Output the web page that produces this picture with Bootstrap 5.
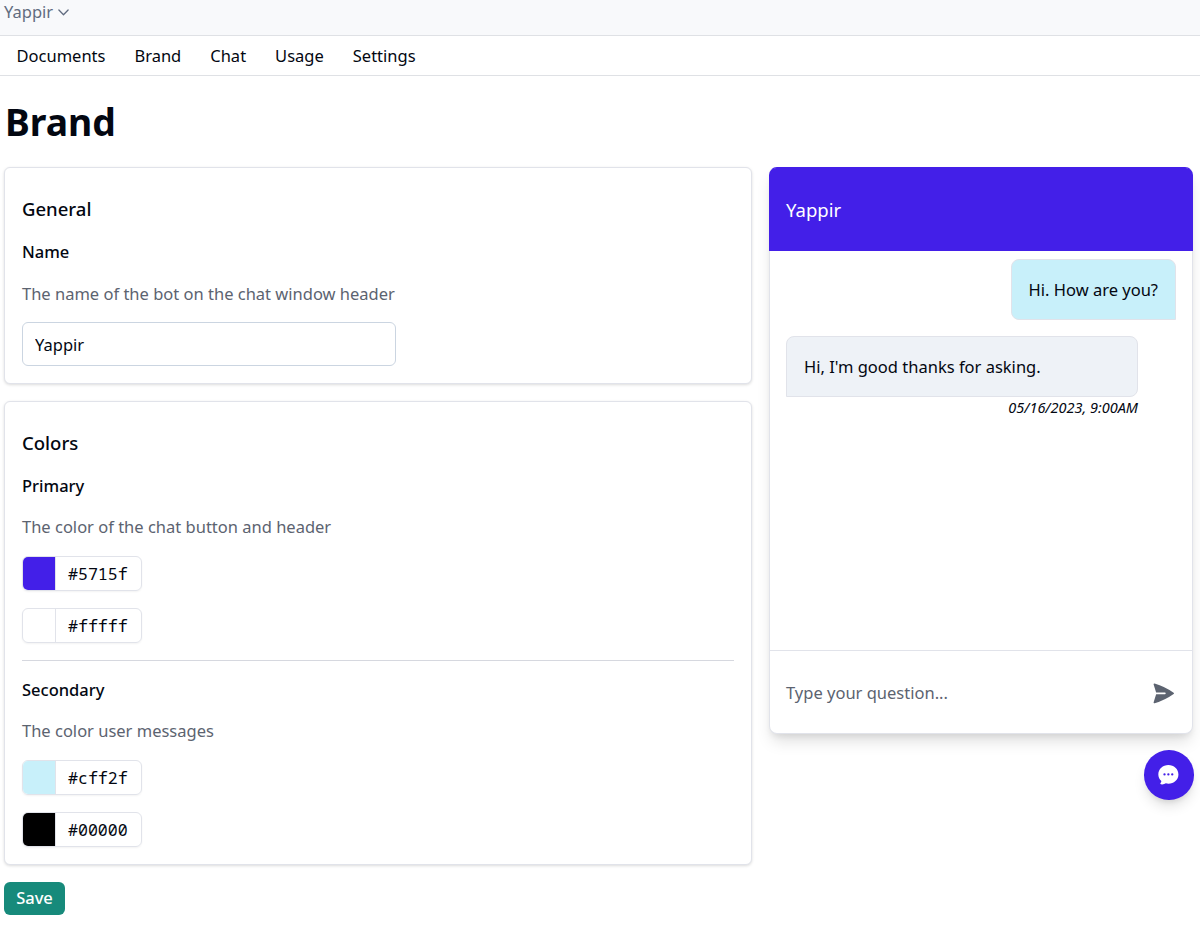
<!DOCTYPE html>
<html lang="en">
<head>
<meta charset="utf-8">
<meta name="viewport" content="width=device-width, initial-scale=1">
<title>Brand</title>
<link href="https://cdn.jsdelivr.net/npm/bootstrap@5.3.0/dist/css/bootstrap.min.css" rel="stylesheet">
<style>
:root { --ink:#030711; --muted-ink:#5c6370; --line:#e1e3ea; --brand:#431fe8; --user:#c8f0fa; }
body { font-family:"Noto Sans",sans-serif; font-size:16.5px; line-height:24.75px; color:var(--ink); background:#fff; }
.topbar { height:36px; background:#f8f9fb; border-bottom:1px solid #dfe1e5; padding-left:4px; color:#616c80; }
.topbar a { color:inherit; line-height:24px; gap:5px; }
.mainnav { height:40px; border-bottom:1px solid #dfe1e5; padding:2px 0 0 16.5px; gap:29px; }
.mainnav .nav-link { color:var(--ink); padding:0; }
.page { padding:0 7px 0 4px; }
.page h1 { font-size:37.3px; line-height:42px; font-weight:700; padding:25px 0 0 1px; margin:0 0 24px; }
.settings { width:748px; gap:17px; }
.panel { border:1px solid var(--line); border-radius:6px; padding:28px 17px 17px; box-shadow:0 1px 3px rgba(0,0,0,.14); background:#fff; }
.panel h2 { font-size:18.55px; line-height:25px; font-weight:500; margin:0 0 19px; }
.panel h3 { font-size:16.5px; line-height:24px; font-weight:500; margin:0 0 17px; }
.panel p { color:var(--muted-ink); margin:0 0 16px; line-height:25px; }
.panel-colors h3 { margin-bottom:16px; }
.panel-colors p { margin-bottom:17px; }
.name-field { width:374px; height:44px; border:1px solid #cbd5e1; border-radius:6px; padding:0 12px; font-size:16.5px; color:var(--ink); }
.swatch { width:120px; height:35px; border:1px solid var(--line); border-radius:6px; overflow:hidden; box-shadow:0 1px 2px rgba(0,0,0,.05); font-family:"Noto Sans Mono","DejaVu Sans Mono",monospace; }
.swatch span:first-child { width:33px; border-right:1px solid var(--line); }
.swatch span:last-child { padding-left:12px; font-size:16.6px; line-height:33px; }
.swatches { gap:17px; }
.c-primary { background:var(--brand); } .c-user { background:var(--user); } .c-black { background:#000; }
.panel hr { margin:17px 0; border-color:#d6d8df; opacity:1; }
.btn-save { --bs-btn-bg:#178a7b; --bs-btn-color:#fff; --bs-btn-hover-bg:#127568; --bs-btn-hover-color:#fff; width:61px; height:33px; padding:0; border:0; border-radius:6px; font-size:16.5px; font-weight:500; }
.chat { width:424px; height:567px; border:1px solid var(--line); border-top-color:var(--brand); border-radius:8px; box-shadow:0 10px 16px -3px rgba(0,0,0,.13),0 4px 6px -2px rgba(0,0,0,.08); background:#fff; }
.chat-head { height:83px; background:var(--brand); color:#fff; font-size:18.55px; padding:2px 0 0 16px; margin:0 -1px 0 -1px; padding-left:17px; border-radius:7px 7px 0 0; }
.bubble { height:61px; border:1px solid var(--line); border-radius:8px; padding:2px 17px 0; }
.bubble.out { background:var(--user); border-bottom-right-radius:0; margin-top:8px; }
.bubble.in { background:#eef2f7; border-bottom-left-radius:0; width:352px; margin-top:16px; }
.stamp { width:352px; font-size:14.5px; line-height:20px; font-style:italic; }
.chat-body { padding:0 16px; }
.chat-foot { height:83px; border-top:1px solid var(--line); padding:2px 16px 0; color:var(--muted-ink); }
.fab { width:49.5px; height:49.5px; border:0; border-radius:50%; background:var(--brand); color:#fff; margin-top:16px; margin-right:-.5px; box-shadow:0 8px 14px -3px rgba(0,0,0,.14),0 4px 5px -2px rgba(0,0,0,.08); }
</style>
</head>
<body>
<header class="topbar">
  <a href="#" class="d-inline-flex align-items-center text-decoration-none">Yappir
    <svg width="11" height="7" viewBox="0 0 11 7" fill="none" stroke="currentColor" stroke-width="1.3" stroke-linecap="round" stroke-linejoin="round"><path d="M.9 1 5.5 5.7 10.1 1"/></svg></a>
</header>
<nav class="mainnav nav align-items-center">
  <a class="nav-link" href="#">Documents</a><a class="nav-link" href="#">Brand</a><a class="nav-link" href="#">Chat</a><a class="nav-link" href="#">Usage</a><a class="nav-link" href="#">Settings</a>
</nav>
<main class="page">
  <h1>Brand</h1>
  <div class="d-flex justify-content-between align-items-start">
    <form class="settings d-flex flex-column">
      <section class="panel">
        <h2>General</h2>
        <h3>Name</h3>
        <p>The name of the bot on the chat window header</p>
        <input class="name-field d-block" type="text" value="Yappir" aria-label="Name">
      </section>
      <section class="panel panel-colors">
        <h2>Colors</h2>
        <h3>Primary</h3>
        <p>The color of the chat button and header</p>
        <div class="swatches d-flex flex-column">
          <div class="swatch d-flex"><span class="c-primary"></span><span>#5715f</span></div>
          <div class="swatch d-flex"><span></span><span>#fffff</span></div>
        </div>
        <hr>
        <h3>Secondary</h3>
        <p>The color user messages</p>
        <div class="swatches d-flex flex-column">
          <div class="swatch d-flex"><span class="c-user"></span><span>#cff2f</span></div>
          <div class="swatch d-flex"><span class="c-black"></span><span>#00000</span></div>
        </div>
      </section>
      <button type="button" class="btn btn-save">Save</button>
    </form>
    <aside class="d-flex flex-column align-items-end">
      <section class="chat d-flex flex-column">
        <div class="chat-head d-flex align-items-center">Yappir</div>
        <div class="chat-body flex-grow-1 d-flex flex-column">
          <div class="bubble out d-flex align-items-center align-self-end">Hi. How are you?</div>
          <div class="bubble in d-flex align-items-center">Hi, I'm good thanks for asking.</div>
          <div class="stamp text-end">05/16/2023, 9:00AM</div>
        </div>
        <div class="chat-foot d-flex align-items-center justify-content-between">
          <span>Type your question...</span>
          <svg width="24.75" height="24.75" viewBox="0 0 24 24" fill="currentColor"><path d="M3.478 2.405a.75.75 0 0 0-.926.94l2.432 7.905H13.5a.75.75 0 0 1 0 1.5H4.984l-2.432 7.905a.75.75 0 0 0 .926.94 60.519 60.519 0 0 0 18.445-8.986.75.75 0 0 0 0-1.218A60.517 60.517 0 0 0 3.478 2.405z"/></svg>
        </div>
      </section>
      <button type="button" class="fab d-flex align-items-center justify-content-center p-0" aria-label="Chat">
        <svg width="24.75" height="24.75" viewBox="0 0 24 24" fill="currentColor"><path fill-rule="evenodd" d="M4.804 21.644A6.707 6.707 0 0 0 6 21.75a6.721 6.721 0 0 0 3.583-1.029c.774.182 1.584.279 2.417.279 5.322 0 9.75-3.97 9.75-9s-4.428-9-9.75-9-9.75 3.97-9.75 9c0 2.409 1.025 4.587 2.674 6.192.232.226.277.428.254.543a3.73 3.73 0 0 1-.814 1.686.75.75 0 0 0 .44 1.223zM8.25 10.875a1.125 1.125 0 1 0 0 2.25 1.125 1.125 0 0 0 0-2.25zM10.875 12a1.125 1.125 0 1 1 2.25 0 1.125 1.125 0 0 1-2.25 0zm4.875-1.125a1.125 1.125 0 1 0 0 2.25 1.125 1.125 0 0 0 0-2.25z"/></svg>
      </button>
    </aside>
  </div>
</main>
<script src="https://cdn.jsdelivr.net/npm/bootstrap@5.3.0/dist/js/bootstrap.bundle.min.js"></script>
</body>
</html>
